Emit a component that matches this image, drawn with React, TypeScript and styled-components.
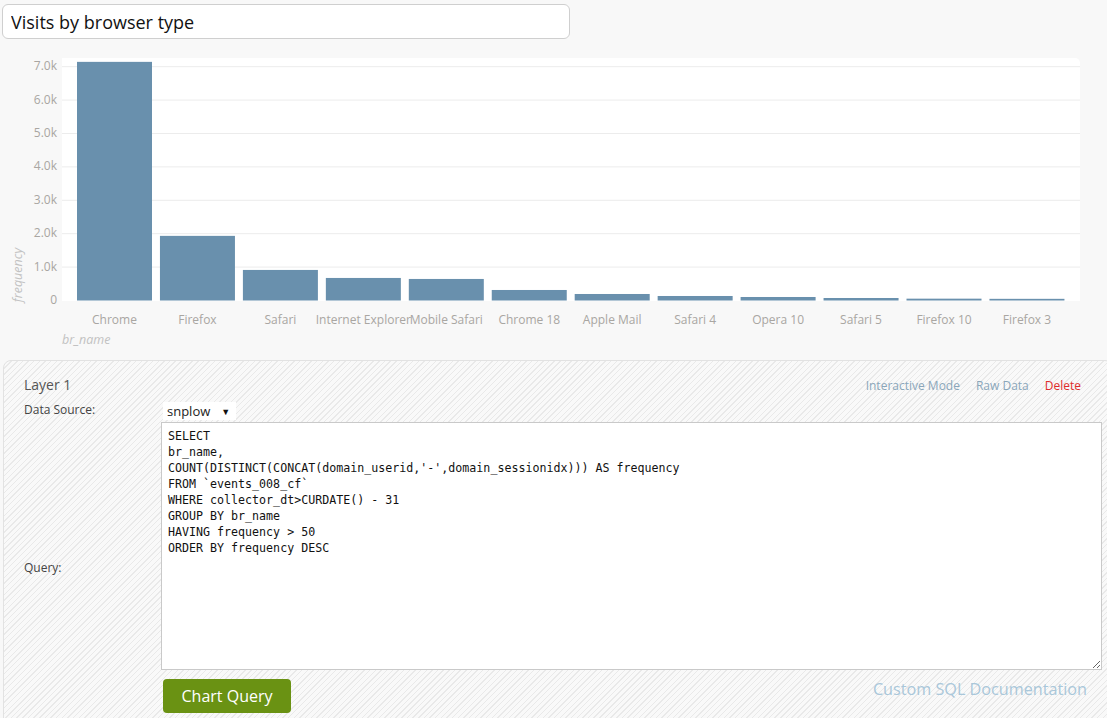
import React from "react";
import styled, { createGlobalStyle } from "styled-components";

type Bar = {
  name: string;
  value: number;
};

const bars: Bar[] = [
  { name: "Chrome", value: 7130 },
  { name: "Firefox", value: 1920 },
  { name: "Safari", value: 900 },
  { name: "Internet Explorer", value: 660 },
  { name: "Mobile Safari", value: 630 },
  { name: "Chrome 18", value: 300 },
  { name: "Apple Mail", value: 180 },
  { name: "Safari 4", value: 120 },
  { name: "Opera 10", value: 90 },
  { name: "Safari 5", value: 60 },
  { name: "Firefox 10", value: 40 },
  { name: "Firefox 3", value: 35 },
];

const query = `SELECT
br_name,
COUNT(DISTINCT(CONCAT(domain_userid,'-',domain_sessionidx))) AS frequency
FROM \`events_008_cf\`
WHERE collector_dt>CURDATE() - 31
GROUP BY br_name
HAVING frequency > 50
ORDER BY frequency DESC`;

// chart geometry (svg starts at page y=45)
const TOP = 45;
const ZERO = 300 - TOP;
const PER_K = 33.4;
const yOf = (v: number) => ZERO - (v / 1000) * PER_K;

function BrowserChart() {
  const ticks = [0, 1, 2, 3, 4, 5, 6, 7];
  return (
    <ChartSvg width="1107" height="310" viewBox="0 0 1107 310">
      <path d="M62 13 H1075 a5 5 0 0 1 5 5 V256 H62 Z" fill="#ffffff" />
      {ticks.map((t) => (
        <g key={t}>
          {t > 0 && (
            <line
              x1="62"
              x2="1080"
              y1={yOf(t * 1000) + 0.5}
              y2={yOf(t * 1000) + 0.5}
              stroke="#ececec"
            />
          )}
          <text x="57" y={yOf(t * 1000) + 4} textAnchor="end" className="tick">
            {t === 0 ? "0" : `${t}.0k`}
          </text>
        </g>
      ))}
      {bars.map((b, i) => {
        const x = 77 + i * 82.95;
        const y = yOf(b.value);
        return (
          <g key={b.name}>
            <rect x={x} y={y} width="75" height={ZERO + 0.5 - y} fill="#6990ad" />
            <text x={x + 37.5} y={279} textAnchor="middle" className="tick">
              {b.name}
            </text>
          </g>
        );
      })}
      <text x="62" y={299} className="axis">
        br_name
      </text>
      <text
        x="0"
        y="0"
        className="axis"
        textAnchor="middle"
        transform="translate(22 230) rotate(-90)"
      >
        frequency
      </text>
    </ChartSvg>
  );
}

export default function App() {
  return (
    <Page>
      <GlobalStyle />
      <TitleInput defaultValue="Visits by browser type" />
      <BrowserChart />

      <LayerPanel>
        <LayerHeader>
          <LayerTitle>Layer 1</LayerTitle>
          <LayerLinks>
            <LayerLink>Interactive Mode</LayerLink>
            <LayerLink>Raw Data</LayerLink>
            <LayerLink $danger>Delete</LayerLink>
          </LayerLinks>
        </LayerHeader>

        <FormGrid>
          <FieldLabel>Data Source:</FieldLabel>
          <div>
            <SourceSelect>
              snplow <span>▼</span>
            </SourceSelect>
          </div>

          <QueryLabel>Query:</QueryLabel>
          <QueryBox defaultValue={query} spellCheck={false} />

          <ActionRow>
            <ChartButton>Chart Query</ChartButton>
            <DocLink>Custom SQL Documentation</DocLink>
          </ActionRow>
        </FormGrid>
      </LayerPanel>
    </Page>
  );
}

const GlobalStyle = createGlobalStyle`
  html, body {
    margin: 0;
    padding: 0;
    background: #f8f8f8;
    font-family: "Open Sans", "Noto Sans", sans-serif;
    overflow: hidden;
  }
`;

const Page = styled.div`
  width: 1107px;
  height: 718px;
  overflow: hidden;
  padding-top: 4px;
  box-sizing: border-box;
`;

const TitleInput = styled.input`
  display: block;
  margin-left: 2px;
  width: 568px;
  height: 35px;
  box-sizing: border-box;
  border: 1px solid #cfcfcf;
  border-radius: 6px;
  background: #fff;
  padding: 0 8px;
  font-family: "Open Sans", sans-serif;
  font-size: 18px;
  color: #111;
  outline: none;
`;

const ChartSvg = styled.svg`
  display: block;
  margin-top: 6px;

  .tick {
    font-family: "Open Sans", sans-serif;
    font-size: 12px;
    fill: #a9a6a2;
  }

  .axis {
    font-family: "Open Sans", sans-serif;
    font-size: 12.5px;
    font-style: italic;
    fill: #c2c2c2;
  }
`;

const LayerPanel = styled.div`
  margin: 5px 0 0 3px;
  width: 1110px;
  height: 400px;
  box-sizing: border-box;
  border: 1px solid #e2e2e2;
  border-radius: 8px;
  padding: 13px 0 0 20px;
  background-color: #f6f6f6;
  background-image: repeating-linear-gradient(
    -45deg,
    #f9f9f9 0px,
    #f9f9f9 3px,
    #e9e9e9 3px,
    #e9e9e9 4px
  );
`;

const LayerHeader = styled.div`
  display: flex;
  align-items: center;
  justify-content: space-between;
  padding-right: 31px;
  height: 20px;
`;

const LayerTitle = styled.div`
  font-size: 14px;
  color: #555;
`;

const LayerLinks = styled.div`
  display: flex;
  gap: 16px;
  padding-top: 2px;
`;

const LayerLink = styled.a<{ $danger?: boolean }>`
  font-size: 12px;
  color: ${(p) => (p.$danger ? "#de2c2c" : "#8aa6ba")};
  cursor: pointer;
`;

const FormGrid = styled.div`
  display: grid;
  grid-template-columns: 137px 941px;
  grid-template-rows: 23px 248px auto;
  margin-top: 5px;
`;

const FieldLabel = styled.div`
  font-size: 12px;
  color: #444;
  padding-top: 2px;
`;

const QueryLabel = styled.div`
  grid-row: 2 / span 2;
  display: flex;
  align-items: center;
  font-size: 12px;
  color: #444;
  padding-bottom: 14px;
`;

const SourceSelect = styled.div`
  display: inline-flex;
  align-items: center;
  gap: 11px;
  margin-left: 2px;
  height: 18px;
  padding: 0 6px 0 4px;
  background: #fff;
  font-size: 13px;
  color: #222;

  span {
    font-size: 9px;
    color: #111;
  }
`;

const QueryBox = styled.textarea`
  box-sizing: border-box;
  width: 941px;
  height: 248px;
  resize: both;
  border: 1px solid #c9c9c9;
  background: #fff;
  padding: 5px 6px 3px;
  margin: 0;
  font-family: "DejaVu Sans Mono", monospace;
  font-size: 11.65px;
  line-height: 16px;
  color: #111;
  outline: none;
`;

const ActionRow = styled.div`
  grid-column: 2;
  display: flex;
  align-items: flex-start;
  justify-content: space-between;
  padding: 9px 15px 0 2px;
  height: 48px;
`;

const ChartButton = styled.button`
  width: 128px;
  height: 34px;
  border: none;
  border-radius: 4px;
  background: #6a9213;
  color: #fff;
  font-family: "Open Sans", sans-serif;
  font-size: 16px;
  cursor: pointer;
`;

const DocLink = styled.a`
  font-size: 16.2px;
  line-height: 20px;
  color: #a9c7da;
`;
